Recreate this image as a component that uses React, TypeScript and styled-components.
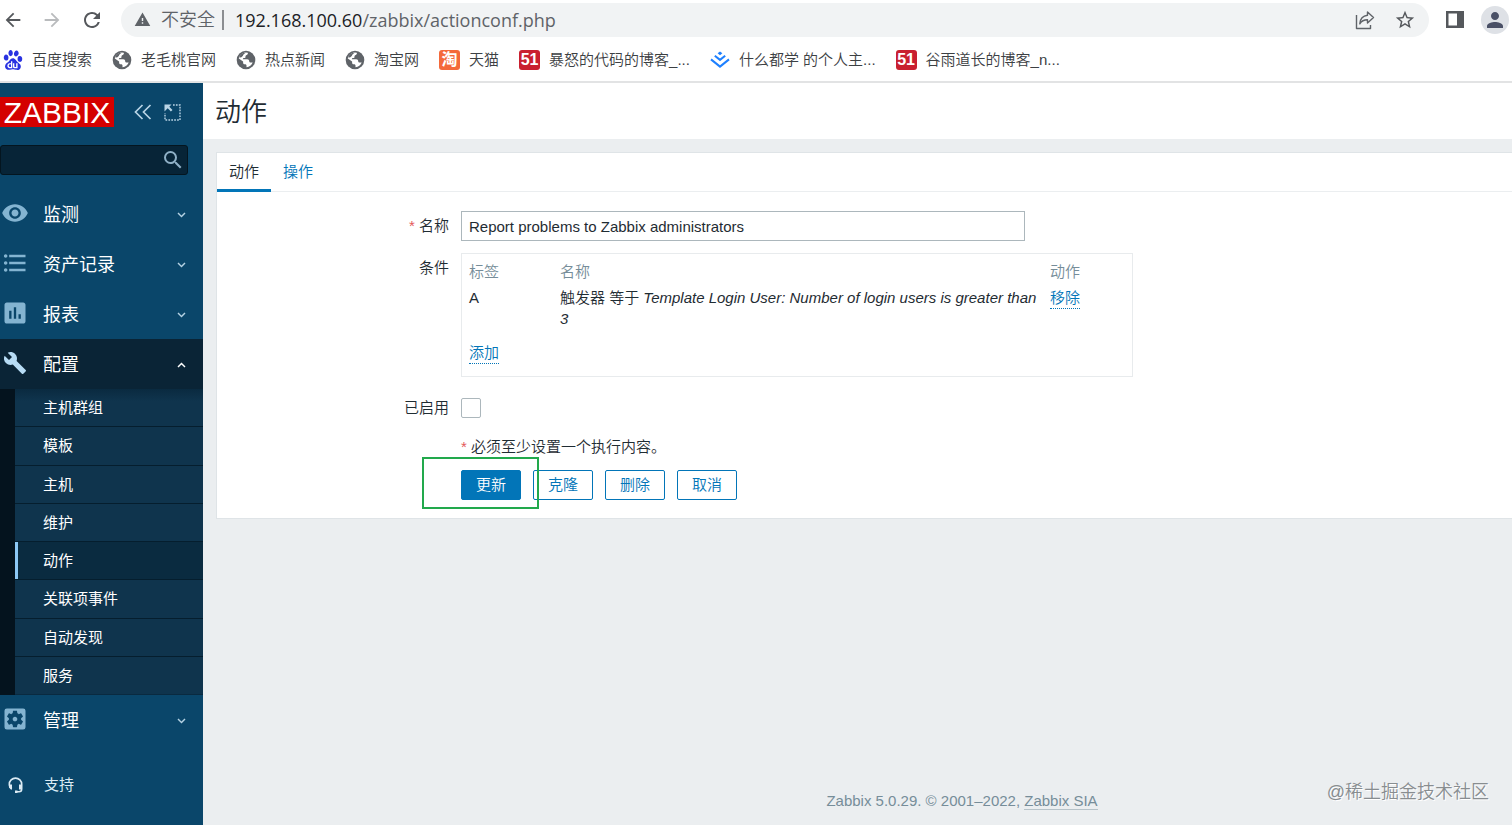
import React from "react";
import styled, { createGlobalStyle, css } from "styled-components";
import {
  MdArrowBack, MdArrowForward, MdRefresh, MdWarning, MdStarBorder, MdPerson,
  MdSearch, MdVisibility, MdFormatListBulleted, MdAssessment, MdBuild,
  MdSettingsApplications,
} from "react-icons/md";
import { SiBaidu } from "react-icons/si";

const GlobalStyle = createGlobalStyle`
  *, *::before, *::after { box-sizing: border-box; }
  body {
    margin: 0;
    background: #ebeef0;
    color: #1f2c33;
    font: 15px/20px "Liberation Sans", "Noto Sans CJK SC", sans-serif;
  }
  button, input { font: inherit; }
  button { cursor: pointer; }
  a { color: #0275b8; text-decoration: none; }
  svg { display: block; flex: none; }
`;

const Page = styled.div`
  min-height: 100vh;
  display: flex;
  flex-direction: column;
  overflow-x: hidden;
`;

/* ---------- browser chrome ---------- */

const Browser = styled.header`
  background: #fff;
  color: #3c4043;
  border-bottom: 2px solid #e2e3e4;
`;

const Toolbar = styled.div`
  display: flex;
  align-items: center;
  height: 39px;
  padding: 2px 3px 2px 2px;
  gap: 17px;
`;

const IconButton = styled.button<{ $dim?: boolean }>`
  border: 0;
  padding: 0;
  background: none;
  display: grid;
  place-items: center;
  color: ${(p) => (p.$dim ? "#b9bbbd" : "#55585c")};
`;

const AddressBar = styled.div`
  flex: 1;
  display: flex;
  align-items: center;
  height: 34px;
  padding: 0 13px;
  border-radius: 17px;
  background: #f1f3f4;
  color: #5f6368;
  font-size: 18px;
`;

const Insecure = styled.span`
  margin-left: 10px;
  padding-right: 7px;
  border-right: 2px solid #8b8e91;
  font-weight: 350;
  line-height: 20px;
`;

const Url = styled.input`
  position: absolute;
  inset: 0;
  width: 100%;
  border: 0;
  padding: 0;
  background: none;
  color: transparent;
  outline: none;
`;

const UrlBox = styled.label`
  position: relative;
  flex: 1;
  margin-left: 11px;
  font-family: "Open Sans", sans-serif;
  b { font-weight: 400; color: #202124; }
`;

const AddressActions = styled.div`
  display: flex;
  gap: 19px;
`;

const Avatar = styled.button`
  width: 28px;
  height: 28px;
  border: 0;
  padding: 0;
  border-radius: 50%;
  background: #dee1e6;
  color: #4a5066;
  display: grid;
  place-items: center;
`;

const Bookmarks = styled.nav`
  display: flex;
  align-items: center;
  height: 42px;
  padding-left: 3px;
  gap: 20px;
`;

const Bookmark = styled.a`
  display: flex;
  align-items: center;
  gap: 9px;
  color: #3c4043;
  font-weight: 350;
  white-space: nowrap;
`;

const Badge = styled.span<{ $color: string }>`
  width: 21px;
  height: 20px;
  border-radius: 3px;
  background: ${(p) => p.$color};
  color: #fff;
  font: 700 16px/20px "Liberation Sans", "Noto Sans CJK SC", sans-serif;
  text-align: center;
`;

/* ---------- sidebar ---------- */

const Body = styled.div`
  flex: 1;
  display: flex;
`;

const Sidebar = styled.aside`
  flex: none;
  width: 203px;
  padding-top: 14px;
  background: #0a466a;
  color: #fff;
`;

const Brand = styled.div`
  display: flex;
  align-items: center;
  height: 30px;
`;

const Logo = styled.a`
  width: 114px;
  height: 30px;
  margin-right: 20px;
  background: #d40000;
  color: #fff;
  font: 30px/31px "Liberation Sans", sans-serif;
  text-align: center;
`;

const SideButton = styled.button`
  border: 0;
  padding: 0;
  margin-right: 12px;
  background: none;
  color: #b9d4e5;
`;

const Search = styled.form`
  display: flex;
  align-items: center;
  width: 188px;
  height: 30px;
  margin: 18px 0 14px;
  padding-right: 2px;
  border: 1px solid #04151f;
  border-radius: 3px;
  background: #072437;
  input { flex: 1; min-width: 0; border: 0; background: none; color: #fff; outline: none; }
  button { border: 0; padding: 0; background: none; color: #8fb0c6; }
`;

const MenuItem = styled.button<{ $open?: boolean }>`
  display: flex;
  align-items: center;
  width: 100%;
  height: 50px;
  padding: 0 17px 0 1px;
  border: 0;
  background: ${(p) => (p.$open ? "#0a2436" : "none")};
  color: #fff;
  font-size: 18px;
  text-align: left;
  > svg:first-child {
    margin-bottom: 2px;
    padding: ${(p) => (p.$open ? 2 : 0)}px;
    color: ${(p) => (p.$open ? "#b7dcf5" : "#84b4d1")};
  }
  > svg:last-child { margin-top: 2px; }
  > span { flex: 1; margin-left: 14px; padding-top: 1px; }
`;

const Submenu = styled.ul`
  display: grid;
  grid-auto-rows: 1fr;
  height: 306px;
  margin: 0;
  padding: 0;
  list-style: none;
  border-left: 15px solid #04131e;
  background: linear-gradient(#0a2a40, #0f344d 12px);
`;

const SubItem = styled.li<{ $active?: boolean }>`
  border-bottom: 1px solid #051e2e;
  &:last-child { border-bottom-color: #0a2a40; }
  a {
    display: flex;
    align-items: center;
    height: 100%;
    padding: 1px 0 0 28px;
    color: #fff;
    ${(p) => p.$active && css`
      padding-left: 25px;
      border-left: 3px solid #8dc8f5;
      background: #0a2b40;
    `}
  }
`;

const Support = styled.a`
  display: flex;
  align-items: center;
  gap: 21px;
  height: 50px;
  margin: 15px 0;
  padding-left: 8px;
  color: #dcebf4;
`;

/* ---------- main ---------- */

const Main = styled.main`
  position: relative;
  flex: 1;
  min-width: 0;
  display: flex;
  flex-direction: column;
`;

const Title = styled.h1`
  margin: 0;
  height: 56px;
  padding: 0 12px;
  background: #fff;
  font-size: 26px;
  line-height: 58px;
  font-weight: 350;
`;

const Card = styled.section`
  margin: 13px 0 0 13px;
  border: 1px solid #dfe4e7;
  border-right: 0;
  background: #fff;
  font-weight: 350;
`;

const Tabs = styled.nav`
  display: flex;
  height: 39px;
  border-bottom: 1px solid #ebeef0;
`;

const Tab = styled.a<{ $active?: boolean }>`
  height: 39px;
  padding: 0 12px;
  line-height: 38px;
  ${(p) => p.$active && css`
    color: #1f2c33;
    border-bottom: 3px solid #0275b8;
  `}
`;

const Form = styled.form`
  display: grid;
  grid-template-columns: 232px minmax(0, 1fr);
  column-gap: 12px;
  padding: 19px 0 18px;
`;

const FieldLabel = styled.label<{ $required?: boolean; $flush?: boolean }>`
  padding-top: ${(p) => (p.$flush ? 0 : 5)}px;
  text-align: right;
  ${(p) => p.$required && css`&::before { content: "* "; color: #e45959; }`}
`;

const TextInput = styled.input`
  width: 564px;
  max-width: 100%;
  height: 30px;
  margin-bottom: 12px;
  padding: 0 7px;
  border: 1px solid #acb7bc;
  border-radius: 0;
  color: #1f2c33;
  outline: none;
`;

const Conditions = styled.div`
  width: 672px;
  max-width: 100%;
  margin-bottom: 21px;
  padding: 7px 7px 12px;
  border: 1px solid #e8ebed;
`;

const Table = styled.table`
  width: 100%;
  table-layout: fixed;
  border-collapse: collapse;
  text-align: left;
  font-weight: inherit;
  th { height: 26px; padding: 0; color: #768d99; font-weight: 350; line-height: 21px; vertical-align: top; }
  td { padding: 0; line-height: 21px; vertical-align: top; }
  tbody td { padding-right: 12px; }
  th:nth-child(1) { width: 91px; }
  th:nth-child(3) { width: 75px; }
  tfoot td { padding-top: 13px; }
`;

const LinkAction = styled.button`
  height: 21px;
  padding: 0;
  border: 0;
  border-bottom: 1px dotted #0275b8;
  background: none;
  color: #0275b8;
  line-height: 20px;
`;

const Checkbox = styled.input`
  appearance: none;
  width: 20px;
  height: 20px;
  margin: 0 0 19px;
  border: 1px solid #acb7bc;
  border-radius: 2px;
  background: #fff;
`;

const Note = styled.p`
  grid-column: 2;
  margin: 0 0 13px;
  &::before { content: "* "; color: #e45959; }
`;

const Buttons = styled.div`
  grid-column: 2;
  display: flex;
  gap: 12px;
`;

const Marked = styled.div`
  position: relative;
  &::after {
    content: "";
    position: absolute;
    inset: -13px -18px -9px -39px;
    border: 2px solid #22a94c;
    pointer-events: none;
    z-index: 1;
  }
`;

const Button = styled.button<{ $primary?: boolean }>`
  width: 60px;
  height: 30px;
  padding: 0;
  border: 1px solid #0275b8;
  border-radius: 2px;
  background: ${(p) => (p.$primary ? "#0275b8" : "#fff")};
  color: ${(p) => (p.$primary ? "#fff" : "#0275b8")};
`;

const Footer = styled.footer`
  margin-top: auto;
  padding: 0 0 14px 209px;
  color: #768d99;
  text-align: center;
  a { color: inherit; border-bottom: 1px solid #b6c2c8; }
`;

const Watermark = styled.div`
  position: absolute;
  right: 23px;
  bottom: 21px;
  color: #888d90;
  font-size: 18px;
  line-height: 24px;
  font-weight: 350;
  text-shadow: 1px 1px 0 #fff;
`;

const Chevron = ({ up }: { up?: boolean }) => (
  <svg width="9" height="6" viewBox="0 0 9 6" fill="none" stroke={up ? "#fff" : "#b5d2e3"} strokeWidth="1.4">
    <path d={up ? "M1 5l3.5-3.6L8 5" : "M1 1l3.5 3.6L8 1"} />
  </svg>
);

const ShareIcon = () => (
  <svg width="20" height="20" viewBox="0 0 20 20" fill="none" stroke="#5f6368" strokeWidth="1.4" strokeLinejoin="round">
    <path d="M1.500 5v13.500h14V15" />
    <path d="M12.500 2l6 5.500-6 5.500v-3.200C9 9.800 6.500 11 4.800 13.800 5.200 9 8 5.800 12.500 5.300z" />
  </svg>
);

const PanelIcon = () => (
  <svg width="18" height="17" viewBox="0 0 18 17">
    <path fill="#55585c" fillRule="evenodd" d="M0 0h18v17H0zM2.500 2.500v12H11v-12z" />
  </svg>
);

const CollapseIcon = () => (
  <svg width="18" height="16" viewBox="0 0 18 16" fill="none" stroke="currentColor" strokeWidth="1.700">
    <path d="M8.500 1L1.500 8l7 7M16.500 1l-7 7 7 7" />
  </svg>
);

const HideIcon = () => (
  <svg width="17" height="17" viewBox="0 0 17 17" fill="none" stroke="currentColor" strokeWidth="1.400">
    <path strokeDasharray="1.700 1.200" d="M9 1h7v15H1V9" />
    <path fill="currentColor" stroke="none" d="M.5.5h7L5.300 2.700l3.200 3.200-1.600 1.600-3.200-3.200L.5 7.500z" />
  </svg>
);

const GlobeIcon = () => (
  <svg width="20" height="20" viewBox="0 0 20 20">
    <circle cx="10" cy="10" r="9.300" fill="#5f6368" />
    <path
      fill="#fff"
      d="M11.800 2.800c.3 1-.1 1.800-1 2.200-1.100.4-1.400.9-1.300 1.900.1.700-.5 1.200-1.400 1.200-.8 0-1.200.4-1.200 1.200h4.300c1.300 0 2 .8 2 2 0 1 .6 1.200 1.600 1.200h1.900c-1 2.700-3.300 4.600-6.200 4.800v-1.500c0-1-.5-1.500-1.500-1.500-1.300 0-1.900-.7-1.900-1.900v-1L2.800 8.500C3.500 5 6.500 2.600 10 2.600z"
    />
    <path fill="#5f6368" d="M3 7.200C4.500 3.800 7 2.500 9.800 2.700 8 3.800 7.200 4.600 6.800 6L5 7.500z" />
  </svg>
);

const HeadsetIcon = () => (
  <svg width="15" height="16" viewBox="0 0 15 16" fill="none" stroke="currentColor" strokeWidth="1.600">
    <path d="M4 11.500C2 11 1.300 9 1.300 7.300a6.200 6.200 0 0 1 12.400 0v4.700c0 1.600-1 2.700-2.700 2.700H8" />
    <path fill="currentColor" stroke="none" d="M1 7.500h3v5H2.800L1 10.500zM11 7.500h3v5h-3zM7 13.500h2.500V16H7z" />
  </svg>
);

const JuejinIcon = () => (
  <svg width="20" height="18" viewBox="0 0 20 18" fill="none" stroke="#1e80ff" strokeWidth="2">
    <path fill="#1e80ff" stroke="none" d="M10 .4l2.400 1.900L10 4.200 7.600 2.300z" />
    <path d="M4.800 4.800L10 8.900l5.200-4.100M1 8.400l9 7.200 9-7.200" />
  </svg>
);

const red51 = <Badge $color="#c9202f">51</Badge>;

const bookmarks: { icon: React.ReactNode; text: string }[] = [
  { icon: <SiBaidu size={20} color="#2932e1" />, text: "百度搜索" },
  { icon: <GlobeIcon />, text: "老毛桃官网" },
  { icon: <GlobeIcon />, text: "热点新闻" },
  { icon: <GlobeIcon />, text: "淘宝网" },
  { icon: <Badge $color="#f4693b">淘</Badge>, text: "天猫" },
  { icon: red51, text: "暴怒的代码的博客_..." },
  { icon: <JuejinIcon />, text: "什么都学 的个人主..." },
  { icon: red51, text: "谷雨道长的博客_n..." },
];

const sections = [
  { Icon: MdVisibility, text: "监测" },
  { Icon: MdFormatListBulleted, text: "资产记录" },
  { Icon: MdAssessment, text: "报表" },
];

const configuration = ["主机群组", "模板", "主机", "维护", "动作", "关联项事件", "自动发现", "服务"];

export default function App() {
  return (
    <Page>
      <GlobalStyle />
      <Browser>
        <Toolbar>
          <IconButton aria-label="后退"><MdArrowBack size={22} /></IconButton>
          <IconButton aria-label="前进" $dim><MdArrowForward size={22} /></IconButton>
          <IconButton aria-label="刷新"><MdRefresh size={24} /></IconButton>
          <AddressBar>
            <MdWarning size={17} />
            <Insecure>不安全</Insecure>
            <UrlBox>
              <b>192.168.100.60</b>/zabbix/actionconf.php
              <Url aria-label="地址" />
            </UrlBox>
            <AddressActions>
              <IconButton aria-label="分享"><ShareIcon /></IconButton>
              <IconButton aria-label="收藏"><MdStarBorder size={22} /></IconButton>
            </AddressActions>
          </AddressBar>
          <IconButton aria-label="侧边栏"><PanelIcon /></IconButton>
          <Avatar aria-label="用户"><MdPerson size={24} /></Avatar>
        </Toolbar>
        <Bookmarks>
          {bookmarks.map((b) => (
            <Bookmark href="#" key={b.text}>{b.icon}{b.text}</Bookmark>
          ))}
        </Bookmarks>
      </Browser>

      <Body>
        <Sidebar>
          <Brand>
            <Logo href="#">ZABBIX</Logo>
            <SideButton aria-label="折叠"><CollapseIcon /></SideButton>
            <SideButton aria-label="隐藏"><HideIcon /></SideButton>
          </Brand>
          <Search>
            <input aria-label="搜索" />
            <button type="button" aria-label="开始搜索"><MdSearch size={24} /></button>
          </Search>
          {sections.map(({ Icon, text }) => (
            <MenuItem key={text}><Icon size={28} /><span>{text}</span><Chevron /></MenuItem>
          ))}
          <MenuItem $open><MdBuild size={28} /><span>配置</span><Chevron up /></MenuItem>
          <Submenu>
            {configuration.map((text) => (
              <SubItem key={text} $active={text === "动作"}><a href="#">{text}</a></SubItem>
            ))}
          </Submenu>
          <MenuItem><MdSettingsApplications size={28} /><span>管理</span><Chevron /></MenuItem>
          <Support href="#"><HeadsetIcon />支持</Support>
        </Sidebar>

        <Main>
          <Title>动作</Title>
          <Card>
            <Tabs>
              <Tab href="#" $active>动作</Tab>
              <Tab href="#">操作</Tab>
            </Tabs>
            <Form>
              <FieldLabel htmlFor="name" $required>名称</FieldLabel>
              <div><TextInput id="name" defaultValue="Report problems to Zabbix administrators" /></div>
              <FieldLabel as="div">条件</FieldLabel>
              <Conditions>
                <Table>
                  <thead><tr><th>标签</th><th>名称</th><th>动作</th></tr></thead>
                  <tbody>
                    <tr>
                      <td>A</td>
                      <td>触发器 等于 <em>Template Login User: Number of login users is greater than 3</em></td>
                      <td><LinkAction type="button">移除</LinkAction></td>
                    </tr>
                  </tbody>
                  <tfoot><tr><td colSpan={3}><LinkAction type="button">添加</LinkAction></td></tr></tfoot>
                </Table>
              </Conditions>
              <FieldLabel htmlFor="enabled" $flush>已启用</FieldLabel>
              <Checkbox id="enabled" type="checkbox" />
              <Note>必须至少设置一个执行内容。</Note>
              <Buttons>
                <Marked><Button type="button" $primary>更新</Button></Marked>
                <Button type="button">克隆</Button>
                <Button type="button">删除</Button>
                <Button type="button">取消</Button>
              </Buttons>
            </Form>
          </Card>
          <Footer>Zabbix 5.0.29. © 2001–2022, <a href="#">Zabbix SIA</a></Footer>
          <Watermark>@稀土掘金技术社区</Watermark>
        </Main>
      </Body>
    </Page>
  );
}
